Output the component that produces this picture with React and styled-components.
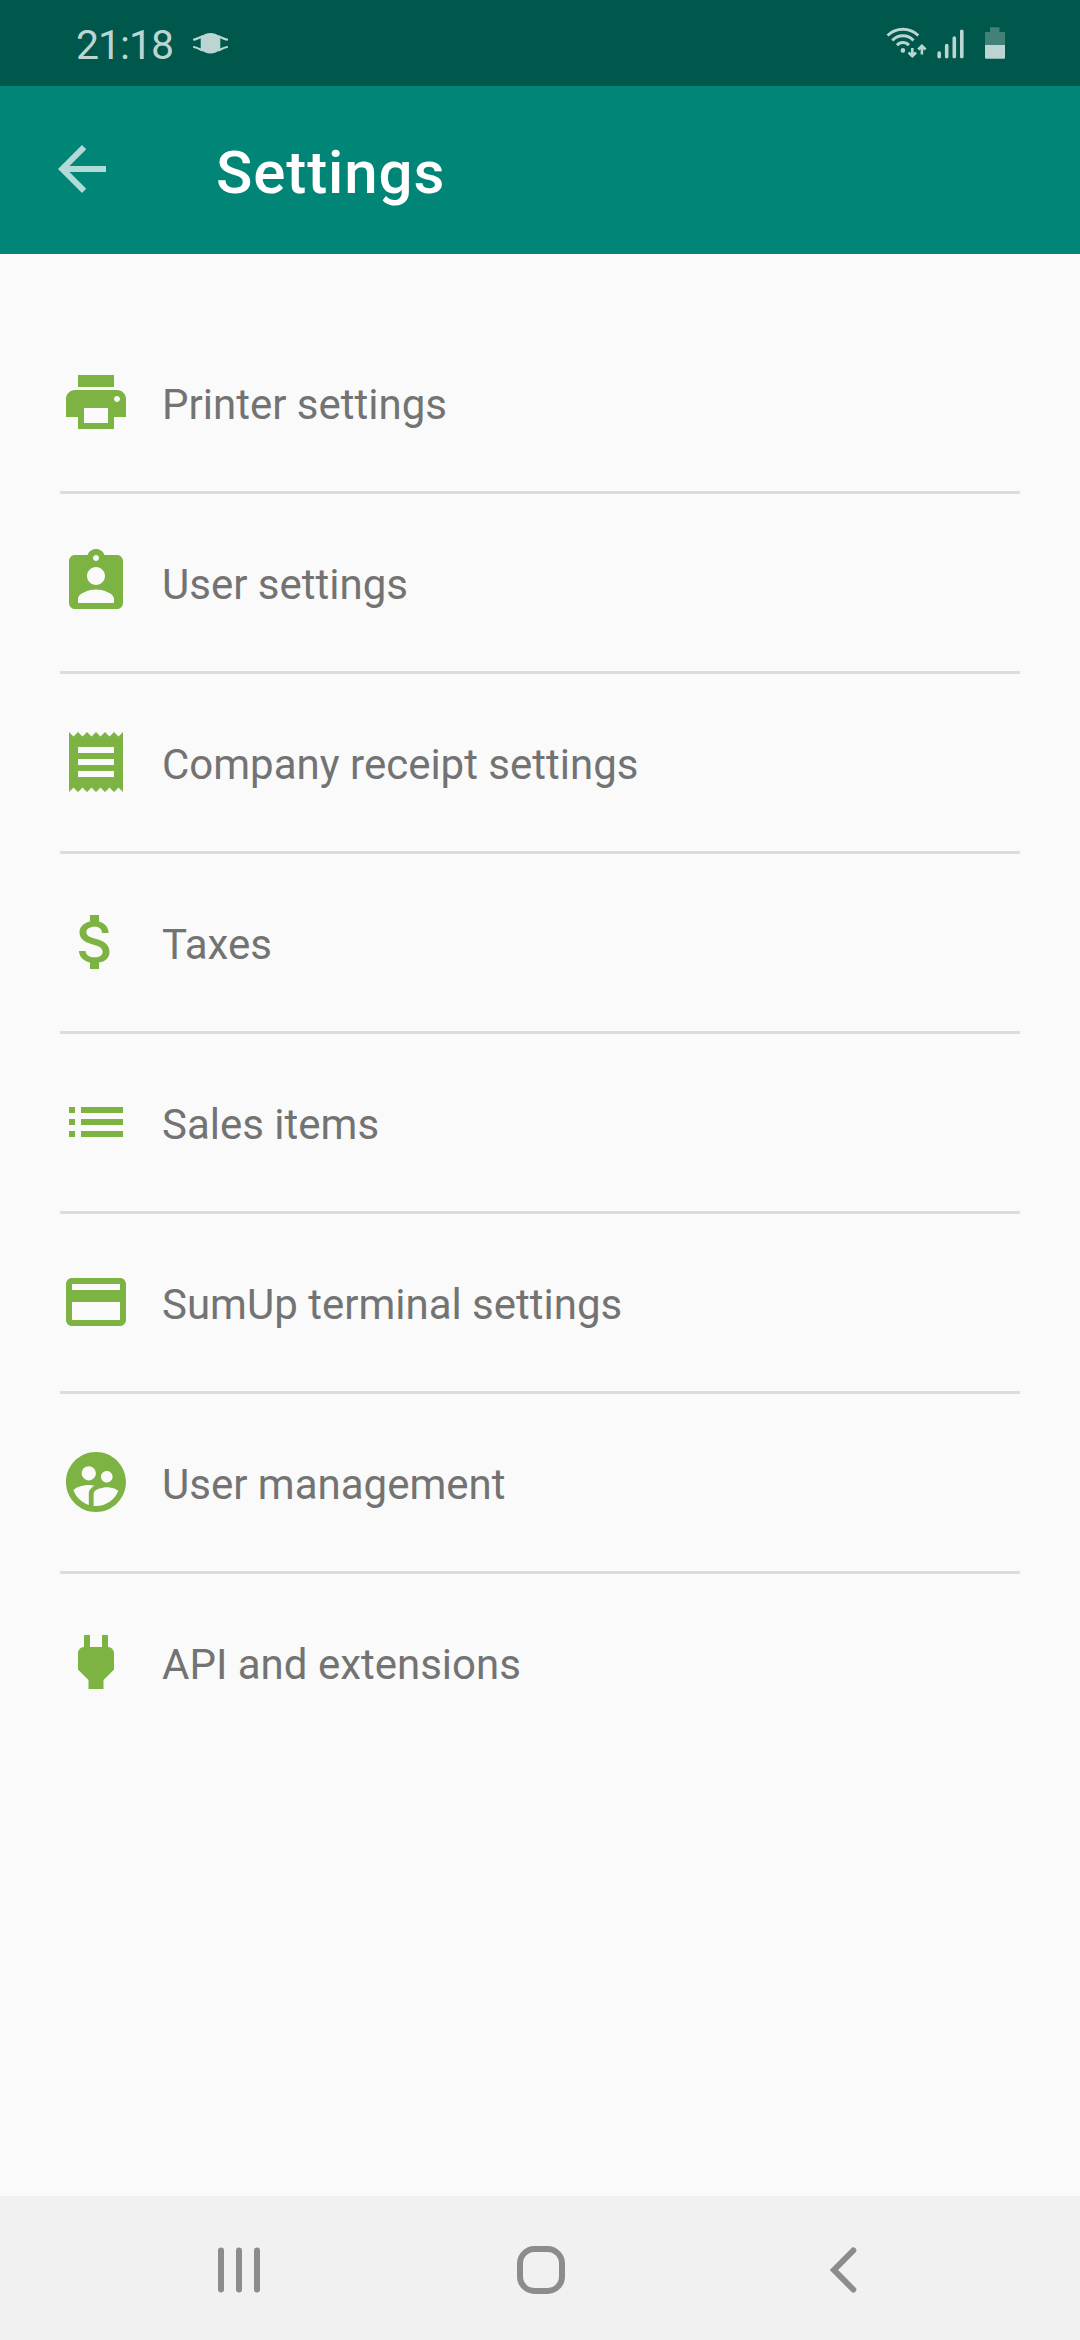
import React from 'react';
import styled, { createGlobalStyle } from 'styled-components';
import {
    MdPrint,
    MdAssignmentInd,
    MdReceipt,
    MdAttachMoney,
    MdList,
    MdPayment,
    MdSupervisedUserCircle,
    MdPower,
} from 'react-icons/md';

const GlobalStyle = createGlobalStyle`
    body{
        margin:0;
        background:#fafafa;
        font-family:Roboto, "Noto Sans", sans-serif;
    }
`;

const Screen = styled.div`
    width:1080px;
    height:2340px;
    display:flex;
    flex-direction:column;
    background:#fafafa;
    overflow:hidden;
`;

const StatusBar = styled.div`
    height:86px;
    box-sizing:border-box;
    padding:2px 74px 0 76px;

    display:flex;
    justify-content:space-between;
    align-items:center;

    background:#00574b;
    color:#bcd5d2;
`;

const StatusGroup = styled.div`
    display:flex;
    align-items:center;
`;

const Clock = styled.div`
    width:117px;
    padding-top:2px;
    font-size:41px;
    line-height:48px;
    letter-spacing:-1px;
    white-space:nowrap;
`;

const StatusIcon = styled.svg`
    display:block;
    flex:none;
`;

const AppBar = styled.header`
    height:168px;
    box-sizing:border-box;
    padding-left:46px;

    display:flex;
    align-items:center;

    background:#008577;
`;

const BackButton = styled.button`
    width:72px;
    height:72px;
    padding:0;
    margin:0 98px 2px 0;
    border:0;
    background:none;
    color:#b2dad6;

    svg{
        display:block;
    }
`;

const Title = styled.h1`
    margin:0;
    padding-top:5px;
    font-size:60px;
    font-weight:500;
    line-height:71px;
    letter-spacing:0.9px;
    color:#fff;
`;

const Menu = styled.ul`
    flex:1;
    margin:0;
    padding:60px 60px 0;
    list-style:none;
`;

const MenuItem = styled.li`
    height:180px;
    box-sizing:border-box;
    padding-top:52px;

    display:flex;
    align-items:flex-start;

    border-bottom:solid 3px #dcdcdc;

    &:last-child{
        border-bottom:0;
    }
`;

const MenuIcon = styled.div`
    width:72px;
    height:72px;
    margin-right:30px;
    color:#7cb342;

    svg{
        display:block;
        width:72px;
        height:72px;
    }
`;

const MenuLabel = styled.div`
    padding-top:14px;
    font-size:42px;
    line-height:49px;
    color:#737373;
`;

const NavBar = styled.nav`
    height:144px;
    box-sizing:border-box;
    padding:0 90px;

    display:grid;
    grid-template-columns:repeat(3, 1fr);
    justify-items:center;
    align-items:center;

    background:#f1f1f1;
    color:#8c8c8c;
`;

const NavIcon = styled.svg`
    display:block;
    width:60px;
    height:60px;
    margin-top:4px;
    fill:none;
    stroke:currentColor;
    stroke-width:6;
    stroke-linecap:round;
`;

const items = [
    { label: 'Printer settings', Icon: MdPrint },
    { label: 'User settings', Icon: MdAssignmentInd },
    { label: 'Company receipt settings', Icon: MdReceipt },
    { label: 'Taxes', Icon: MdAttachMoney },
    { label: 'Sales items', Icon: MdList },
    { label: 'SumUp terminal settings', Icon: MdPayment },
    { label: 'User management', Icon: MdSupervisedUserCircle },
    { label: 'API and extensions', Icon: MdPower },
];

function Status(){
    return(
        <StatusBar>
            <StatusGroup>
                <Clock>21:18</Clock>
                <StatusIcon width="36" height="22" viewBox="0 0 36 22" fill="currentColor">
                    <path d="M7.7 4C13 -1.200 22 -1.200 27.300 4V16.500C22 21.800 13 21.800 7.700 16.500Z"/>
                    <path d="M1 6.600C4 6 5.500 5 9 3.400M34 6.600C31 6 29.500 5 26 3.400M1 14C4 14.600 5.500 15.500 9 17.200M34 14C31 14.600 29.500 15.500 26 17.200" fill="none" stroke="currentColor" strokeWidth="2.200" strokeLinecap="round"/>
                </StatusIcon>
            </StatusGroup>
            {/* wifi, signal strength, battery */}
            <StatusIcon width="120" height="34" viewBox="0 0 120 34" fill="none" stroke="currentColor">
                <path d="M1.500 8.500A22.400 22.400 0 0 1 32.300 8.500M6.300 13.400A14.400 14.400 0 0 1 27.500 13.400M11 18.200A8 8 0 0 1 22.900 18.200" strokeWidth="3"/>
                <circle cx="16.900" cy="23.400" r="2.300" fill="currentColor" stroke="none"/>
                <path d="M26.300 21V29M22.600 25.500L26.300 29.200L30 25.500M35.900 27.500V19M32.200 22.500L35.900 18.800L39.600 22.500" strokeWidth="2.600"/>
                <path d="M53.200 26V29.700M60.700 18.500V29.700M68.300 11V29.700M75.800 4.300V29.700" strokeWidth="3.600" strokeLinecap="round"/>
                <path d="M104 .3H113.500V5H119V18H99V5H104Z" fill="#438077" stroke="none"/>
                <path d="M99 18H119V31L118.300 31.700H99.700L99 31Z" fill="currentColor" stroke="none"/>
            </StatusIcon>
        </StatusBar>
    );
}

function App(){
    return(
        <Screen>
            <GlobalStyle/>
            <Status/>
            <AppBar>
                <BackButton aria-label="Back">
                    <svg width="72" height="72" viewBox="0 0 24 24" fill="currentColor">
                        <path d="M20 11H7.830l5.590-5.590L12 4l-8 8 8 8 1.410-1.410L7.830 13H20v-2z"/>
                    </svg>
                </BackButton>
                <Title>Settings</Title>
            </AppBar>
            <Menu>
                {items.map(({ label, Icon }) => (
                    <MenuItem key={label}>
                        <MenuIcon><Icon/></MenuIcon>
                        <MenuLabel>{label}</MenuLabel>
                    </MenuItem>
                ))}
            </Menu>
            <NavBar>
                <NavIcon viewBox="0 0 60 60">
                    <path d="M11 10.500V49.500M29 10.500V49.500M47 10.500V49.500"/>
                </NavIcon>
                <NavIcon viewBox="0 0 60 60">
                    <rect x="10" y="9" width="42" height="42" rx="14.500"/>
                </NavIcon>
                <NavIcon viewBox="0 0 60 60">
                    <path d="M43.300 10.500L24 30L43.300 49.500"/>
                </NavIcon>
            </NavBar>
        </Screen>
    );
}

export default App
